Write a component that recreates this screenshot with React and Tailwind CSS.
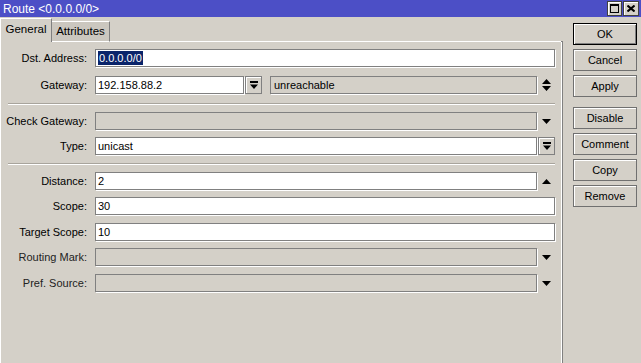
const FONT = "font-['Liberation_Sans',Arial,sans-serif]"

function DownTri() {
  return (
    <svg width="9" height="5" viewBox="0 0 9 5">
      <path d="M0 0h9L4.5 5z" fill="#000" />
    </svg>
  )
}

function UpTri() {
  return (
    <svg width="9" height="5" viewBox="0 0 9 5">
      <path d="M4.5 0L9 5H0z" fill="#000" />
    </svg>
  )
}

function UpDown() {
  return (
    <svg width="9" height="12" viewBox="0 0 9 12">
      <path d="M4.5 0L9 5H0z M0 7h9L4.5 12z" fill="#000" />
    </svg>
  )
}

function DropButton() {
  return (
    <div className="flex h-[18px] w-[17px] shrink-0 items-center justify-center border border-[#808080] bg-[#d4d0c8] shadow-[inset_1px_1px_0_#fff]">
      <svg width="8" height="8" viewBox="0 0 8 8">
        <path d="M0 0h8v2H0z M0 3.5h8L4 8z" fill="#000" />
      </svg>
    </div>
  )
}

function Field({ value, grey, className = 'flex-1', children }) {
  return (
    <div
      className={`flex h-[18px] items-center overflow-hidden border border-[#808080] pl-[2px] text-[11px] text-black shadow-[1px_1px_0_#fff] ${
        grey ? 'bg-[#d4d0c8]' : 'bg-white'
      } ${className}`}
    >
      {children || value}
    </div>
  )
}

function Slot({ children }) {
  return <div className="flex h-[18px] w-[18px] shrink-0 items-center justify-center pl-[1px]">{children}</div>
}

function Row({ label, className = '', muted, children }) {
  return (
    <div className={`flex h-[18px] items-center ${className}`}>
      <div className={`w-[86px] shrink-0 text-right text-[11px] leading-none ${muted ? 'text-[#222]' : 'text-black'}`}>
        {label}
      </div>
      <div className="ml-[8px] mr-[7px] flex flex-1 items-center">{children}</div>
    </div>
  )
}

function Separator({ className = '' }) {
  return <div className={`ml-[7px] mr-[7px] h-[2px] border-t border-b border-t-[#a8a49c] border-b-white ${className}`} />
}

function SideButton({ label, primary, className = '' }) {
  return (
    <div
      className={`flex h-[22px] w-[64px] items-center justify-center bg-[#d4d0c8] text-[11px] text-black ${
        primary
          ? 'border border-black shadow-[inset_1px_1px_0_#fff,inset_-1px_-1px_0_#808080]'
          : 'border border-[#707070] shadow-[inset_1px_1px_0_#fff]'
      } ${className}`}
    >
      {label}
    </div>
  )
}

export default function App() {
  return (
    <div className={`flex h-[363px] w-[641px] flex-col overflow-hidden bg-[#d4d0c8] ${FONT}`}>
      <div className="flex h-[17px] shrink-0 items-center bg-[#4c4fc6] pl-[3px] pr-[2px]">
        <span className="text-[12px] leading-none text-white">Route &lt;0.0.0.0/0&gt;</span>
        <div className="ml-auto flex gap-[1px]">
          <div className="flex h-[15px] w-[15px] items-center justify-center border border-[#404040] bg-[#d4d0c8] shadow-[inset_1px_1px_0_#fff]">
            <div className="h-[9px] w-[9px] border border-black border-t-2" />
          </div>
          <div className="flex h-[15px] w-[16px] items-center justify-center border border-[#404040] bg-[#d4d0c8] shadow-[inset_1px_1px_0_#fff]">
            <svg width="8" height="7" viewBox="0 0 8 7">
              <path d="M0.5 0.5L7.5 6.5M7.5 0.5L0.5 6.5" stroke="#000" strokeWidth="2" />
            </svg>
          </div>
        </div>
      </div>

      <div className="flex flex-1">
        <div className="flex w-[563px] shrink-0 flex-col">
          <div className="flex h-[25px] items-end">
            <div className="flex h-[24px] w-[52px] items-center justify-center border-l border-t border-r border-l-white border-t-white border-r-[#808080] pb-[1px] text-[11.5px] text-black">
              General
            </div>
            <div className="flex h-[21px] w-[58px] items-center justify-center border-t border-r border-b border-t-white border-r-[#808080] border-b-white bg-[#cbc7bf] text-[11.5px] text-black">
              Attributes
            </div>
            <div className="h-[1px] flex-1 bg-white" />
            <div className="h-[1px] w-[2px] bg-[#808080]" />
          </div>

          <div className="flex flex-1 flex-col border-l border-r border-l-white border-r-[#808080] pt-[7px] shadow-[inset_-1px_0_0_#fff]">
            <Row label="Dst. Address:">
              <Field>
                <span className="bg-[#0a246a] px-[1px] leading-[14px] text-white">0.0.0.0/0</span>
              </Field>
            </Row>

            <Row label="Gateway:" className="mt-[9px]">
              <Field value="192.158.88.2" className="w-[149px]" />
              <div className="ml-[1px]">
                <DropButton />
              </div>
              <Field value="unreachable" grey className="ml-[8px] flex-1 pl-[3px]" />
              <Slot>
                <UpDown />
              </Slot>
            </Row>

            <Separator className="mt-[9px]" />

            <Row label="Check Gateway:" className="mt-[7px]">
              <Field grey />
              <Slot>
                <DownTri />
              </Slot>
            </Row>

            <Row label="Type:" className="mt-[7px]">
              <Field value="unicast" />
              <div className="ml-[1px]">
                <DropButton />
              </div>
            </Row>

            <Separator className="mt-[8px]" />

            <Row label="Distance:" className="mt-[7px]">
              <Field value="2" />
              <Slot>
                <UpTri />
              </Slot>
            </Row>

            <Row label="Scope:" className="mt-[7px]">
              <Field value="30" />
            </Row>

            <Row label="Target Scope:" className="mt-[8px]">
              <Field value="10" />
            </Row>

            <Row label="Routing Mark:" muted className="mt-[7px]">
              <Field grey />
              <Slot>
                <DownTri />
              </Slot>
            </Row>

            <Row label="Pref. Source:" muted className="mt-[8px]">
              <Field grey />
              <Slot>
                <DownTri />
              </Slot>
            </Row>
          </div>
        </div>

        <div className="flex flex-1 flex-col gap-[4px] pl-[10px] pt-[6px]">
          <SideButton label="OK" primary />
          <SideButton label="Cancel" />
          <SideButton label="Apply" />
          <SideButton label="Disable" className="mt-[6px]" />
          <SideButton label="Comment" />
          <SideButton label="Copy" />
          <SideButton label="Remove" />
        </div>
      </div>
    </div>
  )
}
